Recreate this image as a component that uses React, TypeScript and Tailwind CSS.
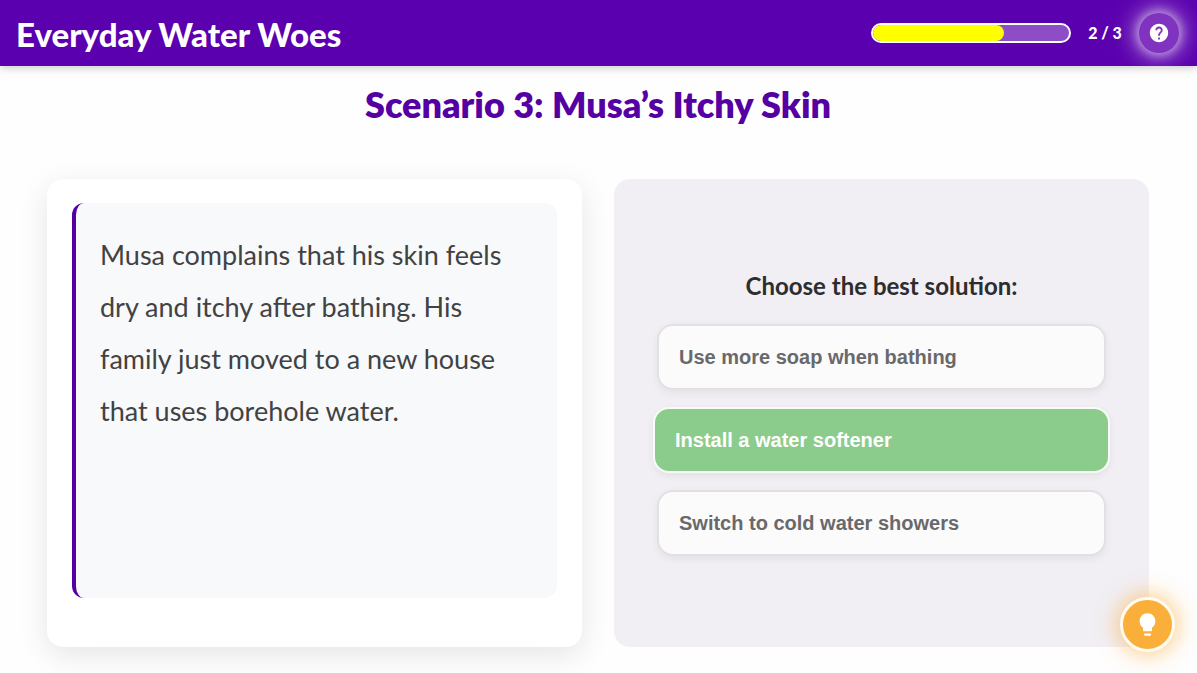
import { MdHelp, MdLightbulb } from "react-icons/md";

type Choice = { label: string; correct?: boolean };

const choices: Choice[] = [
  { label: "Use more soap when bathing" },
  { label: "Install a water softener", correct: true },
  { label: "Switch to cold water showers" },
];

const current = 2;
const total = 3;

function Header() {
  return (
    <header className="flex h-[66px] items-center justify-between overflow-hidden bg-[#5b00ae] pr-[18px] pl-4 text-white">
      <h1 className="pt-0.5 text-[33px] leading-10 font-black">Everyday Water Woes</h1>
      <div className="flex items-center gap-4">
        <div
          role="progressbar"
          aria-label="Progress"
          aria-valuenow={current}
          aria-valuemin={0}
          aria-valuemax={total}
          className="h-5 w-[200px] overflow-hidden rounded-full border-2 border-white bg-white/30"
        >
          <div
            className="h-full rounded-full bg-[#ffff00]"
            style={{ width: `${(current / total) * 100}%` }}
          />
        </div>
        <span className="w-9 text-center text-base font-black whitespace-nowrap">
          {current} / {total}
        </span>
        <button
          type="button"
          aria-label="Help"
          className="flex size-10 items-center justify-center rounded-full bg-[#7f33be] shadow-[0_0_10px_2px_rgba(255,255,255,0.4),0_0_22px_5px_rgba(255,255,255,0.5)]"
        >
          <MdHelp size={22} />
        </button>
      </div>
    </header>
  );
}

function ChoiceButton({ label, correct }: Choice) {
  const tone = correct
    ? "-mx-1 border-[#f6fdf6] bg-[#8bcb8c] text-white"
    : "border-[#e2e0e3] bg-[#fbfbfb] text-[#69696b]";
  return (
    <button
      type="button"
      className={`h-[66px] rounded-2xl border-2 px-5 text-left font-['Liberation_Sans',Arial,sans-serif] text-xl font-bold shadow-[0_3px_8px_rgba(0,0,0,0.06)] ${tone}`}
    >
      {label}
    </button>
  );
}

export default function App() {
  return (
    <div className="flex min-h-screen flex-col overflow-hidden bg-[#fefefe] font-[Lato,sans-serif]">
      <div className="shadow-[0_2px_8px_rgba(0,0,0,0.2)]">
        <Header />
      </div>
      <main className="flex grow flex-col pt-3.5 pr-12 pb-[26px] pl-[47px]">
        <h2 className="text-center text-4xl leading-[48px] font-extrabold text-[#5500a3]">
          Scenario 3: Musa’s Itchy Skin
        </h2>
        <div className="mt-[51px] grid grow grid-cols-2 gap-8">
          <section className="flex flex-col rounded-2xl bg-white px-[25px] pt-6 pb-[49px] shadow-[0_8px_30px_rgba(0,0,0,0.1)]">
            <div className="grow rounded-xl border-l-4 border-[#5500a3] bg-[#f8f9fb] py-[26px] pr-8 pl-6">
              <p className="text-[27px] leading-[52px] text-[#424242]">
                Musa complains that his skin feels dry and itchy after bathing. His family just
                moved to a new house that uses borehole water.
              </p>
            </div>
          </section>
          <section className="flex flex-col justify-center rounded-2xl bg-[#f1eff4] px-[43px]">
            <h3 className="mb-[22px] text-center text-2xl leading-8 font-bold text-[#2d2d2f]">
              Choose the best solution:
            </h3>
            <div className="flex flex-col gap-[17px]">
              {choices.map((choice) => (
                <ChoiceButton key={choice.label} {...choice} />
              ))}
            </div>
          </section>
        </div>
      </main>
      <button
        type="button"
        aria-label="Hint"
        className="fixed right-[22px] bottom-[21px] flex size-[55px] items-center justify-center rounded-full border-[3px] border-[#fffbee] bg-[#fbaf3b] text-white shadow-[0_0_20px_4px_rgba(255,170,50,0.5)]"
      >
        <MdLightbulb size={27} />
      </button>
    </div>
  );
}
